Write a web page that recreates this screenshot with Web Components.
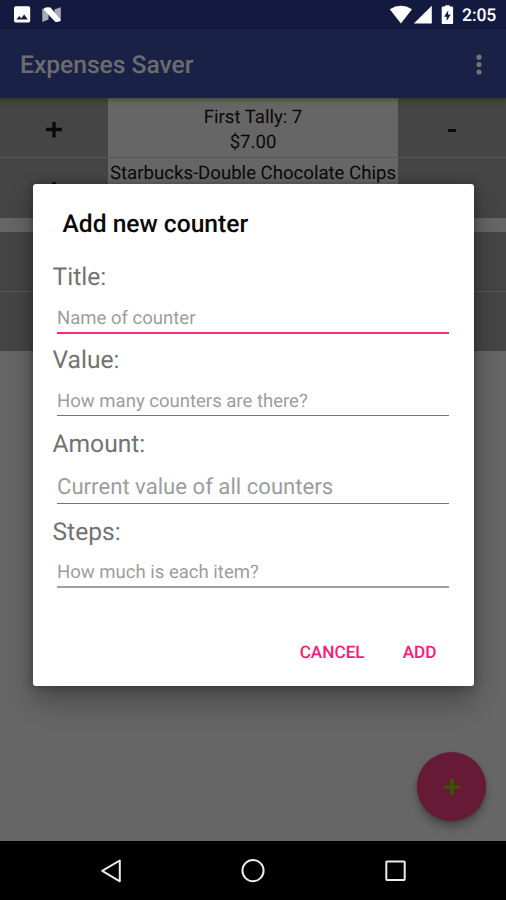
<!DOCTYPE html>
<html lang="en">
<head>
<meta charset="utf-8">
<title>Expenses Saver</title>
<style>
body { margin: 0; width: 506px; height: 900px; overflow: hidden; font-family: Roboto, "Liberation Sans", sans-serif; background: #666; text-rendering: geometricPrecision; }
</style>
</head>
<body>
<expenses-screen></expenses-screen>
<script>
const define = (name, html) => customElements.define(name, class extends HTMLElement {
  constructor() {
    super();
    const t = document.createElement('template');
    t.innerHTML = html;
    this.attachShadow({ mode: 'open' }).append(t.content.cloneNode(true));
  }
});

define('status-bar', `
<style>
:host { display: flex; height: 29px; background: linear-gradient(#141940 25px, #12163a); color: #fff; align-items: center; box-sizing: border-box; }
.left, .right { flex: none; display: block; }
.right { margin-left: auto; }
span { font-size: 17.6px; font-weight: 500; line-height: 29px; width: 35px; margin: 3px 9px 0 8px; white-space: nowrap; letter-spacing: -.1px; }
</style>
<svg class="left" width="70" height="29" viewBox="0 0 70 29">
  <path fill="#fff" fill-rule="evenodd" d="M15.8 6.3h12.6q1.8 0 1.8 1.8v12.7q0 1.8-1.8 1.8H15.8q-1.8 0-1.8-1.8V8.1q0-1.8 1.8-1.8zM16.3 19.5h11.5l-3.6-4.9-2.9 3.7-2-2.4z"/>
  <path fill="#a9abbc" d="M42.3 8.2l6.2 6.1v5.2l-6.2 2.5zM60.8 7.2v14.3l-6.3-6.1V9.6z"/>
  <path fill="#fff" d="M43.3 9.300Q44.500 6.600 50.500 7.600L60.800 20Q59.800 22.500 55.500 22z"/>
</svg>
<svg class="right" width="70" height="29" viewBox="0 0 70 29">
  <path fill="#fff" d="M5.8 9.2Q16.8 2.4 28 9.2L16.9 23.4zM29.8 23.4L47.8 5.8v17.6z"/>
  <path fill="#fff" fill-rule="evenodd" d="M61.200 5.2h4.5V6.500h2.2q1.2 0 1.2 1.2v15.200q0 1.2-1.2 1.2h-9q-1.2 0-1.2-1.2V7.700Q57.700 6.500 58.900 6.500h2.3zM64.300 10.200l-4.200 6.500h2.600v4.200l4-6.500h-2.700z"/>
</svg>
<span>2:05</span>`);

define('app-bar', `
<style>
:host { display: flex; height: 69px; background: #1a2147; align-items: center; justify-content: space-between; padding: 0 22px 0 20px; box-sizing: border-box; box-shadow: 0 2px 4px rgba(0,0,0,.3); position: relative; }
h1 { margin: 5px 0 0; font-size: 24.6px; font-weight: 500; color: #6c6c6c; line-height: 30px; white-space: nowrap; }
</style>
<h1><slot></slot></h1>
<svg width="10" height="24" viewBox="0 0 10 24" fill="#737373"><circle cx="5" cy="5.200" r="2.600"/><circle cx="5" cy="12.500" r="2.600"/><circle cx="5" cy="20" r="2.600"/></svg>`);

define('tally-row', `
<style>
:host { display: grid; grid-template-columns: 108px 290px 108px; height: 59px; }
.side { background: #454545; display: flex; align-items: center; justify-content: center; }
.mid { background: #666; color: #090909; text-align: center; font-size: 18.6px; line-height: 25px; padding-top: 6.5px; white-space: nowrap; overflow: hidden; box-sizing: border-box; }
i { display: block; background: #090909; }
.plus { width: 16px; height: 16px; margin-top: 4px; clip-path: polygon(6.3px 0,9.700px 0,9.700px 6.300px,16px 6.300px,16px 9.700px,9.700px 9.700px,9.700px 16px,6.300px 16px,6.300px 9.700px,0 9.700px,0 6.300px,6.300px 6.300px); }
.minus { width: 8px; height: 3px; margin-top: 5px; }
</style>
<div class="side"><i class="plus"></i></div><div class="mid"><slot></slot></div><div class="side"><i class="minus"></i></div>`);

define('tally-group', `
<style>:host { display: flex; flex-direction: column; gap: 1px; background: #585858; }</style><slot></slot>`);

define('form-field', `
<style>
:host { display: flex; flex-direction: column; height: var(--h); }
label { font-size: 24.6px; line-height: 30px; margin-top: 1px; color: #737373; white-space: nowrap; }
.input { margin: auto 0 0 4.5px; width: 391.5px; color: #9d9d9d; font-size: var(--size, 18.55px); line-height: 24px; padding-bottom: var(--pad, 3px); border-bottom: var(--line, 1px solid #757575); box-sizing: border-box; white-space: nowrap; }
</style>
<label><slot name="label"></slot></label><div class="input"><slot></slot></div>`);

define('counter-dialog', `
<style>
:host { display: block; position: absolute; left: 32.5px; top: 184px; width: 441px; height: 502px; box-sizing: border-box; background: #fff; border-radius: 3px; box-shadow: 0 14px 28px rgba(0,0,0,.32), 0 0 8px rgba(0,0,0,.3); padding: 26px 20px 0; }
h2 { margin: 0 0 22px 10px; font-size: 24.6px; line-height: 30px; font-weight: 500; color: #090909; white-space: nowrap; }
footer { display: flex; justify-content: flex-end; gap: 38px; padding: 53px 17px 0 0; color: #f91b79; font-size: 17.2px; font-weight: 500; line-height: 24px; }
</style>
<h2>Add new counter</h2>
<form-field style="--h:72px;--pad:2px;--line:2px solid #ff2a7f"><span slot="label">Title:</span>Name of counter</form-field>
<form-field style="--h:71px;--pad:2px;margin-top:11px"><span slot="label">Value:</span>How many counters are there?</form-field>
<form-field style="--h:75px;margin-top:13px;--size:22.15px;--pad:4px"><span slot="label">Amount:</span>Current value of all counters</form-field>
<form-field style="--h:71px;--pad:2px;--line:2px solid #a0a0a0;margin-top:13px"><span slot="label">Steps:</span>How much is each item?</form-field>
<footer><span>CANCEL</span><span>ADD</span></footer>`);

define('add-button', `
<style>
:host { display: flex; align-items: center; justify-content: center; position: absolute; left: 417.4px; top: 752.4px; width: 69px; height: 69px; border-radius: 50%; background: #661a36; box-shadow: 0 6px 9px rgba(0,0,0,.28), 0 1px 3px rgba(0,0,0,.2); }
</style>
<svg width="16" height="16" viewBox="0 0 16 16"><path fill="#385500" d="M6 0h4v6.500h6v3h-6V16H6V9.500H0v-3h6z"/></svg>`);

define('nav-bar', `
<style>:host { display: flex; height: 59px; background: #000; justify-content: center; }</style>
<svg width="506" height="59" viewBox="0 0 506 59" fill="none" stroke="#ececec" stroke-width="2" stroke-linejoin="round">
<path d="M119.800 19.500v20.800L102.200 29.800z"/><circle cx="253" cy="29.600" r="10.600"/><rect x="386.300" y="20.500" width="18.400" height="18.400" rx=".6"/></svg>`);

define('expenses-screen', `
<style>
:host { display: flex; flex-direction: column; width: 506px; height: 900px; position: relative; background: #666; overflow: hidden; }
main { flex: 1; display: flex; flex-direction: column; gap: 14px; }
status-bar, app-bar, nav-bar { flex: none; }
app-bar { z-index: 1; }
</style>
<status-bar></status-bar>
<app-bar>Expenses Saver</app-bar>
<main>
<tally-group><tally-row>First Tally: 7<br>$7.00</tally-row><tally-row style="height:60px"><div style="margin-top:-4px">Starbucks-Double Chocolate Chips</div></tally-row></tally-group>
<tally-group><tally-row></tally-row><tally-row></tally-row></tally-group>
</main>
<nav-bar></nav-bar>
<add-button></add-button>
<counter-dialog></counter-dialog>`);
</script>
</body>
</html>
